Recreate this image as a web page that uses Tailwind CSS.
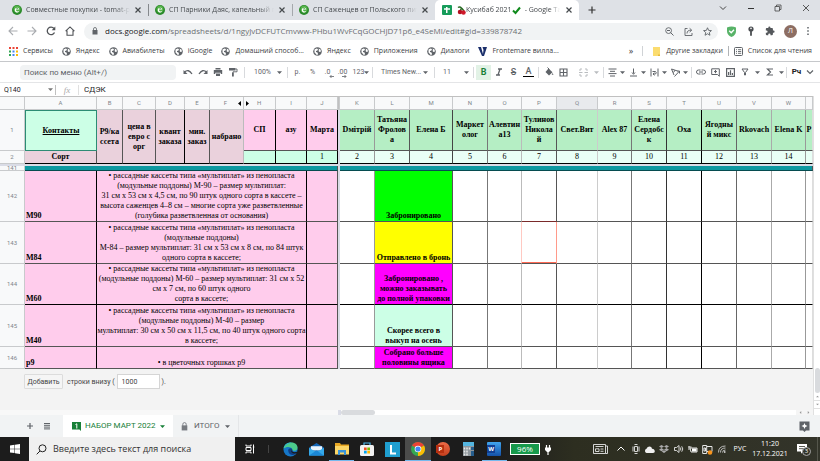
<!DOCTYPE html>
<html lang="ru">
<head>
    <meta charset="UTF-8">
    <meta name="viewport" content="width=device-width, initial-scale=1.0">
    <title>Кусибаб 2021 - Google Таблицы</title>
    <script src="https://cdn.jsdelivr.net/npm/@tailwindcss/browser@4"></script>
</head>
<body class="h-screen flex flex-col overflow-hidden bg-white font-['Open_Sans','Noto_Sans',sans-serif] text-[8px] leading-[10px] text-[#3c4043]">

<!-- shared icons -->
<svg class="hidden">
    <symbol id="globe" viewBox="0 0 18 18"><circle cx="9" cy="9" r="8.6" fill="#5f6368"/><path d="M3 5l4-2 3 1-1 3-3 1v2l3 1 1 3-2 3-2-3-3-3zM11 3l4 2 1 4-3 1-2-2 1-2z" fill="#fff"/></symbol>
    <symbol id="caret" viewBox="0 0 6 6"><path d="M0 1.5h6L3 4.7z" fill="currentColor"/></symbol>
    <symbol id="cross" viewBox="0 0 8 8"><path d="M1.5 1.5l5 5m0-5l-5 5" stroke="currentColor" stroke-width="1.2"/></symbol>
    <symbol id="shop" viewBox="0 0 20 20"><circle cx="10" cy="10" r="10" fill="#2a8a2a"/><circle cx="10" cy="8" r="7" fill="#55b24a"/><path d="M5.500 10c0-6 9-6 9-1H8c0 5 4 4 6 3-1 5-8.500 4-8.500-2z" fill="#fff"/><path d="M8 8c1-2 4-2 4.500 0z" fill="#2a8a2a"/></symbol>
    <symbol id="lock" viewBox="0 0 12 16"><path d="M1 6h10v9H1z" fill="currentColor"/><path d="M3 7V4a3 3 0 016 0v3" fill="none" stroke="currentColor" stroke-width="1.6"/></symbol>
</svg>

<!-- browser tabs -->
<header class="h-5 shrink-0 flex items-center bg-[#dee1e6] text-[7px] text-[#45494d]">
    <div class="w-[148px] pl-3 pr-1 flex items-center gap-1">
        <svg class="size-[10px] shrink-0"><use href="#shop"/></svg>
        <span class="flex-1 overflow-hidden whitespace-nowrap mask-r-from-85%">Совместные покупки - tomat-pomidor</span>
        <button class="size-[10px]" aria-label="Закрыть"><svg class="size-2"><use href="#cross"/></svg></button>
    </div>
    <div class="w-px h-3 bg-[#85888c]"></div>
    <div class="w-[143px] pl-[6px] pr-1 flex items-center gap-1">
        <svg class="size-[10px] shrink-0"><use href="#shop"/></svg>
        <span class="flex-1 overflow-hidden whitespace-nowrap mask-r-from-85%">СП Парники Даяс, капельный полив</span>
        <button class="size-[10px]" aria-label="Закрыть"><svg class="size-2"><use href="#cross"/></svg></button>
    </div>
    <div class="w-px h-3 bg-[#a5a8ac]"></div>
    <div class="w-[142px] pl-[6px] pr-1 flex items-center gap-1">
        <svg class="size-[10px] shrink-0"><use href="#shop"/></svg>
        <span class="flex-1 overflow-hidden whitespace-nowrap mask-r-from-85%">СП Саженцев от Польского питомника</span>
        <button class="size-[10px]" aria-label="Закрыть"><svg class="size-2"><use href="#cross"/></svg></button>
    </div>
    <div class="w-[144px] h-full pl-[7px] pr-1 flex items-center gap-[5px] bg-white rounded-t-[5px]">
        <svg class="size-[10px] shrink-0" viewBox="0 0 20 20"><rect width="20" height="20" rx="2" fill="#179c5a"/><path d="M4 8h12M9.500 4v12" stroke="#fff" stroke-width="3"/></svg>
        <span class="flex-1 flex items-center overflow-hidden whitespace-nowrap mask-r-from-90%">
            <svg class="size-[9px] shrink-0" viewBox="0 0 18 18"><path d="M2 3c4-3 6 0 8 2l4 5M9 4L6 11" stroke="#2a6b25" stroke-width="3" fill="none"/><circle cx="6" cy="12" r="4.500" fill="#b3101f"/><circle cx="13" cy="13" r="4.500" fill="#d0182a"/></svg>
            Кусибаб 2021
            <svg class="size-[9px] shrink-0" viewBox="0 0 18 18"><path d="M2 9l5 5L16 3" stroke="#108a1c" stroke-width="4" fill="none"/></svg>
            <span class="pl-1">- Google Таблицы</span>
        </span>
        <button class="size-[10px]" aria-label="Закрыть"><svg class="size-2"><use href="#cross"/></svg></button>
    </div>
    <button class="ml-2 size-[10px]" aria-label="Новая вкладка"><svg class="size-[10px]" viewBox="0 0 10 10"><path d="M5 1.500v7M1.500 5h7" stroke="#333" stroke-width="1.200"/></svg></button>
    <div class="ml-auto w-[111px] flex justify-around items-center pb-1">
        <button aria-label="Список вкладок"><svg class="size-2" viewBox="0 0 8 8"><path d="M1 2.500l3 3 3-3" stroke="#444" fill="none"/></svg></button>
        <button aria-label="Свернуть"><svg class="size-2" viewBox="0 0 8 8"><path d="M1 4.500h6" stroke="#333"/></svg></button>
        <button aria-label="Окно"><svg class="size-2" viewBox="0 0 8 8"><path d="M1 2.500h4.500V7H1zM2.500 2.500V1H7v4.500H5.500" stroke="#444" stroke-width=".8" fill="none"/></svg></button>
        <button aria-label="Закрыть окно"><svg class="size-2" viewBox="0 0 8 8"><path d="M1 1l6 6m0-6L1 7" stroke="#333" stroke-width=".8"/></svg></button>
    </div>
</header>

<!-- address bar -->
<div class="h-[22px] shrink-0 flex items-center pl-2 pr-[10px]">
    <div class="w-[76px] flex gap-[9px]">
        <button aria-label="Назад"><svg class="size-[10px]" viewBox="0 0 10 10"><path d="M9.500 5H1.500M5 1L1 5l4 4" stroke="#a9acb0" fill="none" stroke-width="1.100"/></svg></button>
        <button aria-label="Вперёд"><svg class="size-[10px]" viewBox="0 0 10 10"><path d="M.5 5h8M5 1l4 4-4 4" stroke="#a9acb0" fill="none" stroke-width="1.100"/></svg></button>
        <button aria-label="Обновить"><svg class="size-[10px]" viewBox="0 0 10 10"><path d="M8.500 6.500a3.800 3.800 0 11-.5-4" stroke="#505357" fill="none" stroke-width="1.300"/><path d="M9.300.6v3.600H5.700z" fill="#505357"/></svg></button>
        <button aria-label="Домой"><svg class="size-[10px]" viewBox="0 0 10 10"><path d="M.6 5.200L5 .9l4.400 4.300M2 4.500V9.300h6V4.500" stroke="#505357" fill="none" stroke-width="1.100"/></svg></button>
    </div>
    <div class="flex-1 h-[17px] pl-2 pr-[6px] flex items-center rounded-full bg-[#f1f3f4]">
        <svg class="w-[6px] h-2 mr-[7px] text-[#5f6368]"><use href="#lock"/></svg>
        <a href="#" class="flex-1 overflow-hidden whitespace-nowrap text-[8px] text-[#6b6f73]"><span class="text-[#202124]">docs.google.com</span>/spreadsheets/d/1ngyJvDCFUTCmvww-PHbu1WvFCqGOCHJD71p6_e4SeMl/edit#gid=339878742</a>
        <div class="flex gap-[10px]">
            <button aria-label="Масштаб"><svg class="size-[9px]" viewBox="0 0 9 9"><path d="M5.500 5.500l3 3M2 3.500h3" stroke="#5f6368"/><circle cx="3.600" cy="3.600" r="2.900" stroke="#5f6368" stroke-width=".9" fill="none"/></svg></button>
            <button aria-label="Поделиться"><svg class="size-[9px]" viewBox="0 0 9 9"><path d="M3.500 1.500H1v7h7V6M3 6.500c0-2.500 1.500-3.300 4-3.300M5.600 1.300l2.200 1.900-2.200 1.900" stroke="#5f6368" stroke-width=".9" fill="none"/></svg></button>
            <button aria-label="Закладка"><svg class="size-[9px]" viewBox="0 0 24 24"><path d="M12 2l3 7 7.500.6-5.700 5 1.700 7.400L12 18l-6.500 4 1.700-7.400-5.700-5L9 9z" stroke="#5f6368" stroke-width="2.400" fill="none"/></svg></button>
        </div>
    </div>
    <div class="flex items-center gap-[9px] ml-2">
        <svg class="size-[11px]" viewBox="0 0 11 11"><path d="M1 1.500Q5.500-.5 10 1.500V5q0 4-4.500 6Q1 9 1 5z" fill="#58b368"/><path d="M3.200 4.800l2 2L8 3.700" stroke="#fff" stroke-width="1.300" fill="none"/></svg>
        <svg class="size-[10px]" viewBox="0 0 10 10"><circle cx="5" cy="3" r="2.600" fill="#4b4e52"/><path d="M5 4v5.800" stroke="#4b4e52" stroke-width="1.800"/><circle cx="5" cy="2.400" r=".8" fill="#fff"/></svg>
        <svg class="size-[10px]" viewBox="0 0 24 24"><path d="M20.500 11H19V7a2 2 0 00-2-2h-4V3.500a2.500 2.500 0 00-5 0V5H4a2 2 0 00-2 2v3.800h1.500a2.700 2.700 0 010 5.400H2V20a2 2 0 002 2h3.800v-1.500a2.700 2.700 0 015.400 0V22H17a2 2 0 002-2v-4h1.500a2.500 2.500 0 000-5z" fill="#55585c"/></svg>
        <button class="size-[13px] rounded-full bg-[#8d6e63] text-white text-[7px]">Л</button>
        <button aria-label="Меню"><svg class="w-1 h-[10px]" viewBox="0 0 4 10"><path d="M2 1v1.600M2 4.200v1.600M2 7.400V9" stroke="#5f6368" stroke-width="1.500"/></svg></button>
    </div>
</div>

<!-- bookmarks -->
<nav class="h-[20px] shrink-0 flex items-center gap-[9px] pl-[9px] pr-2 pb-px border-b border-[#c6c8cb] text-[7px] whitespace-nowrap">
    <a href="#" class="flex items-center gap-[5px]"><svg class="size-[9px]" viewBox="0 0 9 9"><path d="M0 1h2m5 0h2" stroke="#ea4335" stroke-width="2"/><path d="M3.500 1h2" stroke="#ea4335" stroke-width="2"/><path d="M0 4.500h2" stroke="#34a853" stroke-width="2"/><path d="M3.500 4.500h2M3.500 8h2" stroke="#4285f4" stroke-width="2"/><path d="M7 4.500h2M7 8h2" stroke="#fbbc04" stroke-width="2"/><path d="M0 8h2" stroke="#34a853" stroke-width="2"/></svg>Сервисы</a>
    <a href="#" class="flex items-center gap-[5px]"><svg class="size-[9px]"><use href="#globe"/></svg>Яндекс</a>
    <a href="#" class="flex items-center gap-[5px]"><svg class="size-[9px]"><use href="#globe"/></svg>Авиабилеты</a>
    <a href="#" class="flex items-center gap-[5px]"><svg class="size-[9px]"><use href="#globe"/></svg>iGoogle</a>
    <a href="#" class="flex items-center gap-[5px]"><svg class="size-[9px]"><use href="#globe"/></svg>Домашний способ...</a>
    <a href="#" class="flex items-center gap-[5px]"><svg class="size-[9px]"><use href="#globe"/></svg>Яндекс</a>
    <a href="#" class="flex items-center gap-[5px]"><svg class="size-[9px]"><use href="#globe"/></svg>Приложения</a>
    <a href="#" class="flex items-center gap-[5px]"><svg class="size-[9px]"><use href="#globe"/></svg>Диалоги</a>
    <a href="#" class="flex items-center gap-[5px]"><svg class="size-[9px]" viewBox="0 0 9 9"><path d="M0 0h3l2 7 .5-4L4.500 0H9L6 9H4z" fill="#1b2f6b"/></svg>Frontemare вилла...</a>
    <button class="ml-auto text-[9px]">»</button>
    <div class="w-px h-[10px] bg-[#d0d3d6]"></div>
    <a href="#" class="flex items-center gap-[5px]"><svg class="size-[9px]" viewBox="0 0 9 9"><path d="M1 0h7v9H1z" fill="#fbdc6f"/><path d="M6 9V7.500h2V9z" fill="#e5b93c"/></svg>Другие закладки</a>
    <div class="-mx-1 w-px h-[10px] bg-[#b0b3b6]"></div>
    <a href="#" class="flex items-center gap-[5px]"><svg class="size-[9px]" viewBox="0 0 9 9"><rect x=".5" y=".5" width="8" height="8" rx="1" stroke="#5f6368" fill="none"/><path d="M2 2.700h1M4 2.700h3.200M2 4.500h1M4 4.500h3.200M2 6.300h1M4 6.300h3.200" stroke="#5f6368" stroke-width=".9"/></svg>Список для чтения</a>
</nav>

<!-- sheet toolbar -->
<div class="h-[21px] shrink-0 flex items-center pl-5 pr-1 border-b border-[#e4e5e7] font-['Roboto',sans-serif] text-[7px] text-[#5f6368] [&>button]:w-[15px] [&>button]:shrink-0 [&>button]:flex [&>button]:items-center [&>button]:justify-center [&>hr]:w-px [&>hr]:h-[11px] [&>hr]:shrink-0 [&>hr]:border-0 [&>hr]:bg-[#d8dadd]">
    <input type="text" aria-label="Поиск по меню" placeholder="Поиск по меню (Alt+/)" class="w-[156px] shrink-0 h-[15px] pl-1 mr-1 rounded-[4px] bg-[#f1f3f4] text-[8px] placeholder:text-[#5f6368]">
    <button aria-label="Отменить"><svg class="size-[10px]" viewBox="0 0 10 10"><path d="M1.500 5q4-3.500 7.500 2" stroke="currentColor" stroke-width="1.300" fill="none"/><path d="M.5 3v4h4z" fill="currentColor"/></svg></button>
    <button aria-label="Повторить"><svg class="size-[10px]" viewBox="0 0 10 10"><path d="M8.500 5q-4-3.500-7.500 2" stroke="currentColor" stroke-width="1.300" fill="none"/><path d="M9.500 3v4h-4z" fill="currentColor"/></svg></button>
    <button aria-label="Печать"><svg class="size-[10px]" viewBox="0 0 10 10"><path d="M2.500 1h5v1.500h-5zM.8 3h8.400v4H7.700V5.700H2.300V7H.8zM3 6.500h4V9H3z" fill="currentColor"/></svg></button>
    <button aria-label="Копировать формат"><svg class="size-[10px]" viewBox="0 0 10 10"><path d="M1 1h6.500v2.500H1zM4 5.500h1.800V9.500H4z" fill="currentColor"/><path d="M7.500 2H9v2.800H5v1" stroke="currentColor" fill="none" stroke-width=".9"/></svg></button>
    <hr class="mx-1">
    <button class="w-[38px]! gap-[6px]">100% <svg class="size-[5px]"><use href="#caret"/></svg></button>
    <hr class="mr-[2px]">
    <button>р.</button>
    <button>%</button>
    <button aria-label="Уменьшить разрядность"><span class="relative">.0<svg class="absolute left-1 top-2 w-[5px] h-[3px]" viewBox="0 0 5 3"><path d="M5 1.500H1M2.500 0L1 1.500 2.500 3" stroke="currentColor" stroke-width=".8" fill="none"/></svg></span></button>
    <button aria-label="Увеличить разрядность"><span class="relative">.00<svg class="absolute left-1 top-2 w-[5px] h-[3px]" viewBox="0 0 5 3"><path d="M0 1.500h4M2.500 0L4 1.500 2.500 3" stroke="currentColor" stroke-width=".8" fill="none"/></svg></span></button>
    <button class="w-[22px]!">123<svg class="size-[5px]"><use href="#caret"/></svg></button>
    <hr>
    <button class="w-[61px]! justify-between! pl-2 pr-[6px]">Times New... <svg class="size-[5px]"><use href="#caret"/></svg></button>
    <hr>
    <button class="w-[38px]! justify-between! pl-2 pr-1">11 <svg class="size-[5px]"><use href="#caret"/></svg></button>
    <hr class="mr-[2px]">
    <button class="h-[15px] bg-[#e2f2e6] text-[#188038] text-[9px] font-bold">B</button>
    <button aria-label="Курсив"><svg class="size-2" viewBox="0 0 8 8"><path d="M3 1h4M1 7h4M5 1L3 7" stroke="currentColor" stroke-width="1.300"/></svg></button>
    <button class="text-[9px] font-medium line-through">S</button>
    <button class="text-[9px] font-medium"><span class="border-b border-black px-[3px] leading-[9px]">A</span></button>
    <hr class="mx-[2px]">
    <button aria-label="Заливка"><svg class="size-[10px]" viewBox="0 0 10 10"><path d="M4.500 1.500l4 3.700L5 8.500 1.500 5z" fill="currentColor"/><path d="M3.500.5l2 2" stroke="currentColor"/><path d="M8.600 6l.9 1.800H7.700z" fill="currentColor"/></svg></button>
    <button aria-label="Границы"><svg class="size-[9px]" viewBox="0 0 9 9"><path d="M1 1h7v7H1zM4.500 1v7M1 4.500h7" stroke="currentColor" fill="none" stroke-width="1.100"/></svg></button>
    <button aria-label="Объединить" class="w-[32px]! gap-[6px] pl-1 text-[#b9bcbf]"><svg class="size-[9px]" viewBox="0 0 9 9"><path d="M3 1H1v2M6 1h2v2M3 8H1V6M6 8h2V6M0 4.500h3.500M5.500 4.500H9" stroke="currentColor" fill="none"/></svg><svg class="size-[5px]"><use href="#caret"/></svg></button>
    <hr class="mr-[2px]">
    <button aria-label="По горизонтали" class="w-[21px]! gap-[3px]"><svg class="size-[9px]" viewBox="0 0 9 9"><path d="M.5 1h8M2 3.300h5M.5 5.600h8M2 8h5" stroke="currentColor"/></svg><svg class="size-[5px]"><use href="#caret"/></svg></button>
    <button aria-label="По вертикали" class="w-[21px]! gap-[3px]"><svg class="size-[9px]" viewBox="0 0 9 9"><path d="M1 8h7M4.500.5v5M3 4.500l1.500 1.800L6 4.500" stroke="currentColor" fill="none"/></svg><svg class="size-[5px]"><use href="#caret"/></svg></button>
    <button aria-label="Перенос" class="w-[21px]! gap-[3px]"><svg class="size-[9px]" viewBox="0 0 9 9"><path d="M1 .5v8M8 .5v8M2.500 3.500h3q1.500 1.300 0 2.500h-2M4.500 4.700L3 6l1.500 1.300" stroke="currentColor" fill="none"/></svg><svg class="size-[5px]"><use href="#caret"/></svg></button>
    <button aria-label="Поворот" class="w-[21px]! gap-[3px]"><svg class="size-[9px]" viewBox="0 0 9 9"><path d="M.5 1l2.500 6M.5 1l6 2M2.500 4.500L4 2.200M3.500 8.500L8.500 3M8.500 5.500V3H6" stroke="currentColor" fill="none"/></svg><svg class="size-[5px]"><use href="#caret"/></svg></button>
    <hr class="mx-px">
    <button aria-label="Ссылка"><svg class="size-[10px]" viewBox="0 0 10 10"><path d="M4.500 3H2.500a2 2 0 000 4h2M5.500 3h2a2 2 0 010 4h-2M3 5h4" stroke="currentColor" fill="none"/></svg></button>
    <button aria-label="Комментарий"><svg class="size-[9px]" viewBox="0 0 9 9"><path d="M.7.8h7.600v7.500L6.500 6.500H.7zM4.500 2v3.200M3 3.600h3" stroke="currentColor" fill="none"/></svg></button>
    <button aria-label="Диаграмма"><svg class="size-[9px]" viewBox="0 0 9 9"><path d="M.6.6h7.800v7.800H.6zM2.600 4v3M4.500 2.200V7M6.400 5v2" stroke="currentColor" fill="none" stroke-width="1.200"/></svg></button>
    <button aria-label="Фильтр" class="w-[25px]! gap-[6px]"><svg class="size-2" viewBox="0 0 8 8"><path d="M1 1h6L4.500 4.500V7h-1V4.500z" stroke="currentColor" fill="none"/></svg><svg class="size-[5px]"><use href="#caret"/></svg></button>
    <button aria-label="Функции" class="w-[23px]! gap-[5px]"><svg class="size-2" viewBox="0 0 8 8"><path d="M7 1H1.500L4.500 4l-3 3H7" stroke="currentColor" stroke-width="1.200" fill="none"/></svg><svg class="size-[5px]"><use href="#caret"/></svg></button>
    <hr class="mr-[2px]">
    <button class="font-bold text-[#202124] text-[8px]">Рч</button>
    <button aria-label="Свернуть меню" class="w-3!"><svg class="size-2" viewBox="0 0 8 8"><path d="M1 2.500l3 3 3-3" stroke="currentColor" fill="none" stroke-width="1.200"/></svg></button>
</div>

<!-- formula bar -->
<div class="h-[13px] shrink-0 flex items-center pl-1 font-['Roboto',sans-serif] text-[7px] text-[#202124]">
    <input type="text" aria-label="Ячейка" value="Q140" class="w-11">
    <svg class="size-[5px] text-[#777]"><use href="#caret"/></svg>
    <div class="w-px h-[10px] ml-[2px] bg-[#c0c0c0]"></div>
    <span class="w-[22px] text-center font-['Liberation_Serif',serif] italic text-[9px] text-[#aaa]">fx</span>
    <div class="w-px h-[10px] bg-[#e0e0e0]"></div>
    <input type="text" aria-label="Формула" value="СДЭК" class="flex-1 pl-[5px] text-[8px]">
</div>

<!-- sheet -->
<main class="flex-1 min-h-0 flex bg-[#f3f3f3]">
    <div class="flex-1 min-w-0 flex flex-col">
        <table class="w-full table-fixed border-separate border-spacing-0 border-t border-[#c0c0c0] bg-white font-['Liberation_Serif',serif] text-[8px] leading-[10px] text-center text-black [&_td]:border-r [&_td]:border-b [&_td]:border-[#555] [&_th]:border-r [&_th]:border-b [&_th]:border-[#c8cacc] [&_th]:bg-[#f8f9fa] [&_th]:font-['Roboto',sans-serif] [&_th]:font-normal [&_th]:text-[6px] [&_th]:text-[#80868b]">
            <colgroup id="cols">
                <col class="w-[25px]"><col class="w-[72px]"><col class="w-[26px]"><col class="w-[33px]"><col class="w-[29px]"><col class="w-[25px]"><col class="w-[34px]"><col class="w-[32px]"><col class="w-[31px]"><col class="w-[31px]"><col class="w-[2px]">
            </colgroup>
            <tbody>
            <tr id="letters" class="h-[13px]">
                <th></th><th>A</th><th>B</th><th>C</th><th>D</th><th>E</th>
                <th><span class="flex items-center justify-end gap-[11px] pr-[2px]">F <svg class="w-[3px] h-[5px]" viewBox="0 0 3 5"><path d="M3 0v5L0 2.500z"/></svg></span></th>
                <th><span class="flex items-center gap-2 pl-[2px]"><svg class="w-[3px] h-[5px]" viewBox="0 0 3 5"><path d="M0 0v5l3-2.500z"/></svg> H</span></th>
                <th>I</th><th>J</th><th class="bg-[#c0c0c0]!"></th>
            </tr>
            <tr id="names" class="h-[41px] font-bold">
                <th>1</th>
                <td class="bg-[#ccffe6] border-[#2c8c74]! border-t border-l underline">Контакты</td>
                <td rowspan="2" class="bg-[#ead1dc] border-b-black!">Р9/ка<br>ссета</td>
                <td rowspan="2" class="bg-[#ead1dc] border-b-black!">цена в<br>евро с<br>орг</td>
                <td rowspan="2" class="bg-[#ead1dc] border-b-black! border-r-black!">квант<br>заказа</td>
                <td rowspan="2" class="bg-[#ead1dc] border-b-black!">мин.<br>заказ</td>
                <td rowspan="2" class="bg-[#ead1dc] border-b-black! border-r-[#bbb]!">набрано</td>
                <td class="bg-[#ffccec] border-r-black!">СП</td>
                <td class="bg-[#ffccec] border-r-black!">азу</td>
                <td class="bg-[#ffccec] border-r-black!">Марта</td>
                <td rowspan="2" class="bg-[#dadce6] border-0!"></td>
            </tr>
            <tr id="numbers" class="h-[13px]">
                <th>2</th>
                <td class="bg-[#ead1dc] border-b-black! font-bold">Сорт</td>
                <td class="bg-[#ccffe6] border-b-black! border-r-black!"></td>
                <td class="bg-[#ccffe6] border-b-black! border-r-black!"></td>
                <td class="bg-[#ccffe6] border-b-black! border-r-black!">1</td>
            </tr>
            <tr class="h-[2px]"><td colspan="25" class="bg-[#dadce6] border-0!"></td></tr>
            <tr class="h-[5px]">
                <th><div class="h-1 leading-1 overflow-hidden">141</div></th>
                <td colspan="9" class="bg-[#0d98a0] border-b-[#064c50]!"></td>
                <td class="bg-[#dadce6] border-0!"></td>
                <td colspan="14" class="bg-[#0d98a0] border-b-[#064c50]!"></td>
            </tr>
            <tr class="h-[51px]" data-status="green">
                <th>142</th>
                <td class="bg-[#ffccec] border-r-black! text-left align-bottom font-bold pl-px">М90</td>
                <td colspan="7" class="bg-[#ffccec] border-r-black! whitespace-nowrap align-bottom">• рассадные кассеты типа «мультиплат» из пенопласта<br>(модульные поддоны) М-90 – размер мультиплат:<br>31 см х 53 см х 4,5 см, по 90 штук одного сорта в кассете –<br>высота саженцев 4–8 см – многие сорта уже разветвленные<br>(голубика разветвленная от основания)</td>
                <td class="bg-[#ffccec]"></td>
                <td class="bg-[#dadce6] border-0!"></td>
            </tr>
            <tr class="h-[42px]" data-status="yellow">
                <th>143</th>
                <td class="bg-[#ffccec] border-r-black! text-left align-bottom font-bold pl-px">М84</td>
                <td colspan="7" class="bg-[#ffccec] border-r-black! whitespace-nowrap align-bottom">• рассадные кассеты типа «мультиплат» из пенопласта<br>(модульные поддоны)<br>М-84 – размер мультиплат: 31 см х 53 см х 8 см, по 84 штук<br>одного сорта в кассете;</td>
                <td class="bg-[#ffccec]"></td>
                <td class="bg-[#dadce6] border-0!"></td>
            </tr>
            <tr class="h-[41px]" data-status="magenta">
                <th>144</th>
                <td class="bg-[#ffccec] border-r-black! border-b-black! text-left align-bottom font-bold pl-px">М60</td>
                <td colspan="7" class="bg-[#ffccec] border-r-black! border-b-black! whitespace-nowrap align-bottom">• рассадные кассеты типа «мультиплат» из пенопласта<br>(модульные поддоны) М-60 – размер мультиплат: 31 см х 52<br>см х 7 см, по 60 штук одного<br>сорта в кассете;</td>
                <td class="bg-[#ffccec] border-b-black!"></td>
                <td class="bg-[#dadce6] border-0!"></td>
            </tr>
            <tr class="h-[42px]" data-status="mint">
                <th>145</th>
                <td class="bg-[#ffccec] border-r-black! text-left align-bottom font-bold pl-px">М40</td>
                <td colspan="7" class="bg-[#ffccec] border-r-black! whitespace-nowrap align-bottom">• рассадные кассеты типа «мультиплат» из пенопласта<br>(модульные поддоны) М-40 – размер<br>мультиплат: 30 см х 50 см х 11,5 см, по 40 штук одного сорта<br>в кассете;</td>
                <td class="bg-[#ffccec]"></td>
                <td class="bg-[#dadce6] border-0!"></td>
            </tr>
            <tr class="h-[22px]" data-status="full">
                <th>146</th>
                <td class="bg-[#ffccec] border-r-black! text-left align-bottom font-bold pl-px">р9</td>
                <td colspan="7" class="bg-[#ffccec] border-r-black! align-bottom">• в цветочных горшках р9</td>
                <td class="bg-[#ffccec]"></td>
                <td class="bg-[#dadce6] border-0!"></td>
            </tr>
            </tbody>
        </table>
        <form class="flex items-center pl-6 pt-[5px] font-['Roboto',sans-serif] text-[7px] text-[#444]">
            <button type="button" class="w-[39px] h-[15px] border border-[#dcdcdc] rounded-[1px] bg-[#f5f5f5]">Добавить</button>
            <label for="rowCount" class="pl-1">строки внизу (</label>
            <input id="rowCount" type="text" value="1000" class="w-[43px] h-[15px] mx-[2px] pl-1 border border-[#d5d5d5] bg-white">
            <span>).</span>
        </form>
        <div class="mt-auto h-[5px] flex bg-white">
            <div class="w-[338px] bg-[#f8f8f8]"></div>
            <div class="w-[3px] bg-[#dadce6]"></div>
            <div class="w-[34px] rounded-full bg-[#d9dbde]"></div>
            <div class="ml-auto w-[17px] flex justify-around items-center bg-[#f5f5f5] text-[#999]"><svg class="size-[3px] rotate-90"><use href="#caret"/></svg><svg class="size-[3px] -rotate-90"><use href="#caret"/></svg></div>
        </div>
    </div>
    <div class="w-[7px] flex flex-col justify-end items-center border-l border-[#e0e0e0] bg-white text-[#999]">
        <div class="w-[5px] h-[25px] rounded-full bg-[#d9dbde]"></div>
        <div class="w-full h-2 flex items-center justify-center border-b border-[#e0e0e0]"><svg class="size-[3px] rotate-180"><use href="#caret"/></svg></div>
        <div class="w-full h-2 mb-[6px] flex items-center justify-center border-b border-[#e0e0e0]"><svg class="size-[3px]"><use href="#caret"/></svg></div>
    </div>
</main>

<!-- sheet tabs -->
<div class="h-[22px] shrink-0 flex items-center bg-[#f1f3f4] pl-[26px] pr-[10px] font-['Roboto',sans-serif] text-[8px] text-[#5f6368]">
    <button aria-label="Добавить лист"><svg class="size-2" viewBox="0 0 8 8"><path d="M4 1v6M1 4h6" stroke="currentColor" stroke-width="1.200"/></svg></button>
    <button aria-label="Все листы" class="ml-[9px]"><svg class="size-2" viewBox="0 0 8 8"><path d="M1 1.500h6M1 3.300h6M1 5.100h6M1 6.900h6" stroke="currentColor"/></svg></button>
    <button class="ml-3 h-full w-[110px] flex items-center gap-1 pl-[9px] bg-white text-[#188038] whitespace-nowrap">
        <svg class="size-[9px]" viewBox="0 0 9 9"><path d="M0 0h9v9L7.500 7.500H0z" fill="#188038"/><path d="M3.500 2.500l1.300-.7V6.500" stroke="#fff" fill="none"/></svg>
        НАБОР МАРТ 2022 <svg class="ml-px size-[5px]"><use href="#caret"/></svg>
    </button>
    <button class="h-full w-[66px] flex items-center gap-[6px] pl-2 border-r border-[#e4e6e8]">
        <svg class="w-[7px] h-[9px] text-[#777b80]"><use href="#lock"/></svg>
        ИТОГО <svg class="size-[5px]"><use href="#caret"/></svg>
    </button>
    <button aria-label="Анализ данных" class="ml-auto"><svg class="size-[11px]" viewBox="0 0 11 11"><path d="M.5.500h10v9H7L5.500 11 4 9.500H.5z" fill="#5f6368"/><path d="M5.500 2l.9 2.100 2.100.9-2.100.9-.9 2.100-.9-2.100L2.500 5l2.100-.9z" fill="#fff"/></svg></button>
</div>

<!-- taskbar -->
<footer class="h-6 shrink-0 flex items-center bg-linear-to-r from-[#1c1c1c] from-60% via-[#2d2e20] via-70% to-[#33342a] text-white">
    <button class="w-[29px] flex justify-center" aria-label="Пуск"><svg class="size-[10px]" viewBox="0 0 10 10"><path d="M0 1.400l4.500-.6v3.900H0zM5 .7L10 0v4.700H5zM0 5.200h4.500v3.900L0 8.500zM5 5.200h5V10l-5-.7z" fill="#fff"/></svg></button>
    <div class="w-[206px] h-full flex items-center bg-[#f0f0f0] pl-[7px] gap-[6px]">
        <svg class="size-[11px]" viewBox="0 0 11 11"><circle cx="6.500" cy="4.300" r="3.500" stroke="#222" fill="none"/><path d="M4 7L.7 10.300" stroke="#222"/></svg>
        <input type="text" aria-label="Поиск" placeholder="Введите здесь текст для поиска" class="flex-1 text-[9px] placeholder:text-[#333]">
    </div>
    <button class="w-[30px] flex justify-center" aria-label="Представление задач"><svg class="size-[10px]" viewBox="0 0 10 10"><path d="M1 .5v1.500h5V.5M1 9.500V8h5v1.500M1 3.500h5v3H1zM8.500.5v9M7.800 3h1.500" stroke="#fff" fill="none"/></svg></button>
    <div class="ml-[3px] w-px h-2 bg-[#444]"></div>
    <div class="ml-[9px] w-[229px] h-full grid grid-cols-9 [&>button]:flex [&>button]:items-center [&>button]:justify-center">
        <button aria-label="Edge"><svg class="size-[15px]" viewBox="0 0 16 16"><circle cx="8" cy="8" r="7.500" fill="#1677c8"/><path d="M.7 7C1.500-1.500 15.500-1.500 15.500 6c0 3-3 4-5.500 3 .5-4-6-5-9.300-2z" fill="#4ccb8c"/><path d="M.7 7C1.500 2 6 0 9 1c-3 0-7 2-8.300 6z" fill="#2bb5da"/><path d="M5.500 9c0-2 3-3 4.200-1.500C10 10 11 12 15 11c-2 4-9 4-9.500-2z" fill="#103f86"/><path d="M9 8.500c0 2 3 3 5.700 2l.8 1-3 .8C9.500 12 8 10 9 8.500z" fill="#1c1c1c"/></svg></button>
        <button aria-label="Почта"><svg class="size-[15px]" viewBox="0 0 16 16"><path d="M0 6l8-5 8 5v8H0z" fill="#1164b4"/><path d="M2 4.500h12V9H2z" fill="#e8f3fb"/><path d="M0 6l8 5 8-5v8.500H0z" fill="#35a8e8"/><path d="M0 14.500L8 9l8 5.500z" fill="#1b87d6"/></svg></button>
        <button aria-label="Проводник" class="border-b border-[#76b9ed]"><svg class="size-[14px]" viewBox="0 0 14 14"><path d="M0 1h5l1 1.500h8V12H0z" fill="#e8a723"/><path d="M0 4h14v8.500H0z" fill="#fcd667"/><path d="M3 13V8h8v5H9v-2.500H5V13z" fill="#3a94d8"/></svg></button>
        <button aria-label="Магазин"><svg class="size-[14px]" viewBox="0 0 14 14"><path d="M4 4V1h6v3" stroke="#4cb4e8" stroke-width="1.200" fill="none"/><rect y="3" width="14" height="11" rx="1.500" fill="#f2f2f2"/><path d="M4 5.500h2.700v2.700H4z" fill="#f25022"/><path d="M7.300 5.500H10v2.700H7.300z" fill="#7fba00"/><path d="M4 8.800h2.700v2.700H4z" fill="#00a4ef"/><path d="M7.300 8.800H10v2.700H7.300z" fill="#ffb900"/></svg></button>
        <button aria-label="Приложение L"><svg class="size-[15px]" viewBox="0 0 15 15"><path d="M0 0h15v15H0z" fill="#1f9fd0"/><path d="M6 3v8.500h5" stroke="#fff" stroke-width="2" fill="none"/></svg></button>
        <button aria-label="Chrome" class="bg-[#4b4c4b] border-b border-[#76b9ed]"><svg class="size-[14px]" viewBox="0 0 14 14"><circle cx="7" cy="7" r="7" fill="#34a853"/><path d="M7 7L.94 3.500A7 7 0 0113.060 3.500z" fill="#ea4335"/><path d="M7 7l6.060-3.500A7 7 0 017 14z" fill="#fbbc04"/><circle cx="7" cy="7" r="3.300" fill="#fff"/><circle cx="7" cy="7" r="2.600" fill="#4285f4"/></svg></button>
        <button aria-label="PowerPoint"><span class="flex items-center size-[14px] rounded-full bg-linear-to-b from-[#ed6c47] to-[#c43e1c]"><span class="size-2 bg-[#b7300f] text-[6px] leading-2 font-bold">P</span></span></button>
        <button aria-label="Калькулятор"><svg class="w-[11px] h-[14px]" viewBox="0 0 11 14"><path d="M0 0h11v14H0z" fill="#8f979d"/><path d="M0 0h11v4H0z" fill="#54b5e0"/><path d="M1.500 5.500v8M4 5.500v8M6.500 5.500v3" stroke="#e8e8e8" stroke-width="1.500" stroke-dasharray="2 1"/><path d="M8 5h3v3H8zM8 9h3v5H8z" fill="#265d8c"/></svg></button>
        <button aria-label="Word" class="border-b border-[#76b9ed]"><span class="flex items-center size-[14px] rounded-[1px] bg-linear-to-b from-[#41a5ee] to-[#1550a8]"><span class="size-2 bg-[#123f94] text-[6px] leading-2 font-bold">W</span></span></button>
    </div>
    <div class="ml-[3px] w-[30px] h-3 flex items-center justify-center border border-white bg-[#17994b] text-[8px]">96%</div>
    <svg class="ml-1 w-2 h-[11px]" viewBox="0 0 8 11"><path d="M2.500 1v3M5.500 1v3M4 7v4" stroke="#fff" stroke-width="1.200"/><path d="M1 3.500h6v2.500L5 8H3L1 6z" fill="#fff"/></svg>
    <div class="ml-auto flex items-center">
        <svg class="w-[15px] h-[10px] mr-[6px]" viewBox="0 0 15 10"><path d="M.5.500h12v9H.5zM12.500 2h2v7.500h-2M2.500 2.500h8M2.500 4.800h3.500v2.700H2.500zM7.500 5h3M7.500 7.300h3" stroke="#e6e6e6" fill="none" stroke-width=".9"/></svg>
        <div class="w-[115px] grid grid-cols-8 justify-items-center items-center">
            <svg class="size-2" viewBox="0 0 8 8"><path d="M.5 5.500L4 2l3.500 3.500" stroke="#fff" fill="none"/></svg>
            <svg class="size-[10px]" viewBox="0 0 10 10"><path d="M3.500 2.500h3v5h-3zM3.500.5h3M3.500 9.500h3M2 2.500v5M8 2.500v5" stroke="#e6e6e6" fill="none" stroke-width=".9"/></svg>
            <svg class="w-[11px] h-[7px]" viewBox="0 0 11 7"><path d="M2.500 7a2.200 2.200 0 010-4.200C4-.5 7.500 0 8 2.700c3 0 4 4 1 4.300z" fill="#f0f0f0"/></svg>
            <svg class="w-[10px] h-2" viewBox="0 0 10 8"><path d="M2.500 0L5 1.500 2.500 3.100 0 1.500zM7.500 0L10 1.500 7.500 3.100 5 1.500zM2.500 3.100L5 4.700 2.500 6.200 0 4.700zM7.500 3.100L10 4.700 7.500 6.200 5 4.700zM5 5.200l2.300 1.400L5 8 2.700 6.600z" fill="#aaa"/></svg>
            <svg class="size-[10px]" viewBox="0 0 10 10"><path d="M.5 3.500h2L5 1.500v7l-2.500-2h-2zM6.300 3.500q1.200 1.500 0 3M7.700 2.300q2.200 2.700 0 5.400" stroke="#e6e6e6" fill="none" stroke-width=".9"/></svg>
            <svg class="w-[10px] h-[7px]" viewBox="0 0 10 7"><path d="M2 2h7v4H3zM.5 1h3M1 0v4" stroke="#e6e6e6" fill="none"/><path d="M4 2.500h4.500v3H4z" fill="#fff"/></svg>
            <svg class="size-[11px]" viewBox="0 0 11 11"><path d="M.7 1.500h4v8h-4zM5 2.500h5v5H5M2 4h1.500v3H2z" stroke="#e6e6e6" fill="none"/><circle cx="8" cy="8.500" r="2.300" fill="#f7941d"/></svg>
            <svg class="size-2" viewBox="0 0 8 8"><path d="M.5 7.500q0-6.500 7-6.500M2.500 7.500q0-4.500 5-4.500M4.500 7.500q0-2.500 3-2.500" stroke="#ccc" fill="none" stroke-width=".9"/><circle cx="6.700" cy="7" r=".9" fill="#ccc"/></svg>
        </div>
        <span class="w-[22px] text-center text-[7px]">РУС</span>
        <div class="w-[38px] text-center text-[7px]">11:20<br>17.12.2021</div>
        <button class="relative ml-2 mr-[6px] w-[14px] h-3" aria-label="Уведомления">
            <svg class="size-[10px]" viewBox="0 0 10 10"><path d="M0 0h10v7.500H6L4 9.700V7.500H0z" fill="#fff"/><path d="M2 2.500h6M2 4.700h6" stroke="#33342a" stroke-width=".8"/></svg>
            <span class="absolute left-[5px] top-1 size-[9px] rounded-full border border-[#aaa] bg-[#33342a] text-[6px] leading-[7px]">3</span>
        </button>
        <div class="w-px h-6 mr-[2px] bg-[#55564c]"></div>
    </div>
</footer>

<script>
    // participants: letter, name, number, column width, right border
    const people = [
        ['K', 'Dмітрій', 2, 'w-[35px]', 'border-r-[#999]!'],
        ['L', 'Татьяна<br>Фролов<br>а', 3, 'w-[35px]', 'border-r-[#555]!'],
        ['M', 'Елена Б', 4, 'w-[43px]', 'border-r-[#444]!'],
        ['N', 'Маркет<br>олог', 5, 'w-[35px]', 'border-r-[#777]!'],
        ['O', 'Алевтин<br>а13', 6, 'w-[34px]', 'border-r-[#bbb]!'],
        ['P', 'Тулинов<br>Никола<br>й', 7, 'w-[35px]', 'border-r-[#555]!'],
        ['Q', 'Свет.Вит', 8, 'w-[41px]', 'border-r-[#ccc]!'],
        ['R', 'Alex 87', 9, 'w-[34px]', 'border-r-[#777]!'],
        ['S', 'Елена<br>Сердобс<br>к', 10, 'w-[35px]', 'border-r-[#333]!'],
        ['T', 'Оха', 11, 'w-[35px]', 'border-r-black!'],
        ['U', 'Ягодны<br>й микс', 12, 'w-[35px]', 'border-r-[#666]!'],
        ['V', 'Rkovach', 13, 'w-[35px]', 'border-r-[#aaa]!'],
        ['W', 'Elena K', 14, 'w-[34px]', 'border-r-[#999]!'],
        ['', 'Р', '', '', 'border-r-[#ddd]!'],
    ];
    const statuses = {
        green: ['bg-[#00ff00]', 'Забронировано'],
        yellow: ['bg-[#ffff00]', 'Отправлено в бронь'],
        magenta: ['bg-[#ff00ff]', 'Забронировано ,<br>можно заказывать<br>до полной упаковки'],
        mint: ['bg-[#ccffe6]', 'Скорее всего в<br>выкуп на осень'],
        full: ['bg-[#ff00ff]', 'Собрано больше<br>половины ящика'],
    };
    // cells around the one outlined in red
    const outlined = {
        'green P': 'border-r-[#555]! border-b-[#7a2a2a]!',
        'yellow O': 'border-r-[#ffc9c2]!',
        'yellow P': 'border-r-[#ff9a8a]! shadow-[inset_0_-1px_0_#ff6a55]',
    };

    function add(id, html) {
        document.getElementById(id).insertAdjacentHTML('beforeend', html);
    }

    people.forEach(([letter, name, number, width, line]) => {
        add('cols', `<col class="${width}">`);
        add('letters', `<th class="${letter === 'Q' ? 'bg-[#e8eaed]!' : ''}">${letter}</th>`);
        add('names', `<td class="bg-[#b5eec4] whitespace-nowrap ${line}">${name}</td>`);
        add('numbers', `<td class="bg-[#e9fff6] border-b-black! ${line}">${number}</td>`);
    });

    document.querySelectorAll('tr[data-status]').forEach((row) => {
        const status = row.dataset.status;
        const [color, text] = statuses[status];
        const bottom = status === 'magenta' ? 'border-b-black!' : '';
        people.forEach(([letter, , , , line]) => {
            if (letter === 'M') return;
            if (letter === 'L') {
                row.insertAdjacentHTML('beforeend', `<td colspan="2" class="${color} ${bottom} whitespace-nowrap align-bottom font-bold">${text}</td>`);
                return;
            }
            const lines = outlined[`${status} ${letter}`] || `${line} ${bottom}`;
            row.insertAdjacentHTML('beforeend', `<td class="${lines}"></td>`);
        });
    });
</script>
</body>
</html>
